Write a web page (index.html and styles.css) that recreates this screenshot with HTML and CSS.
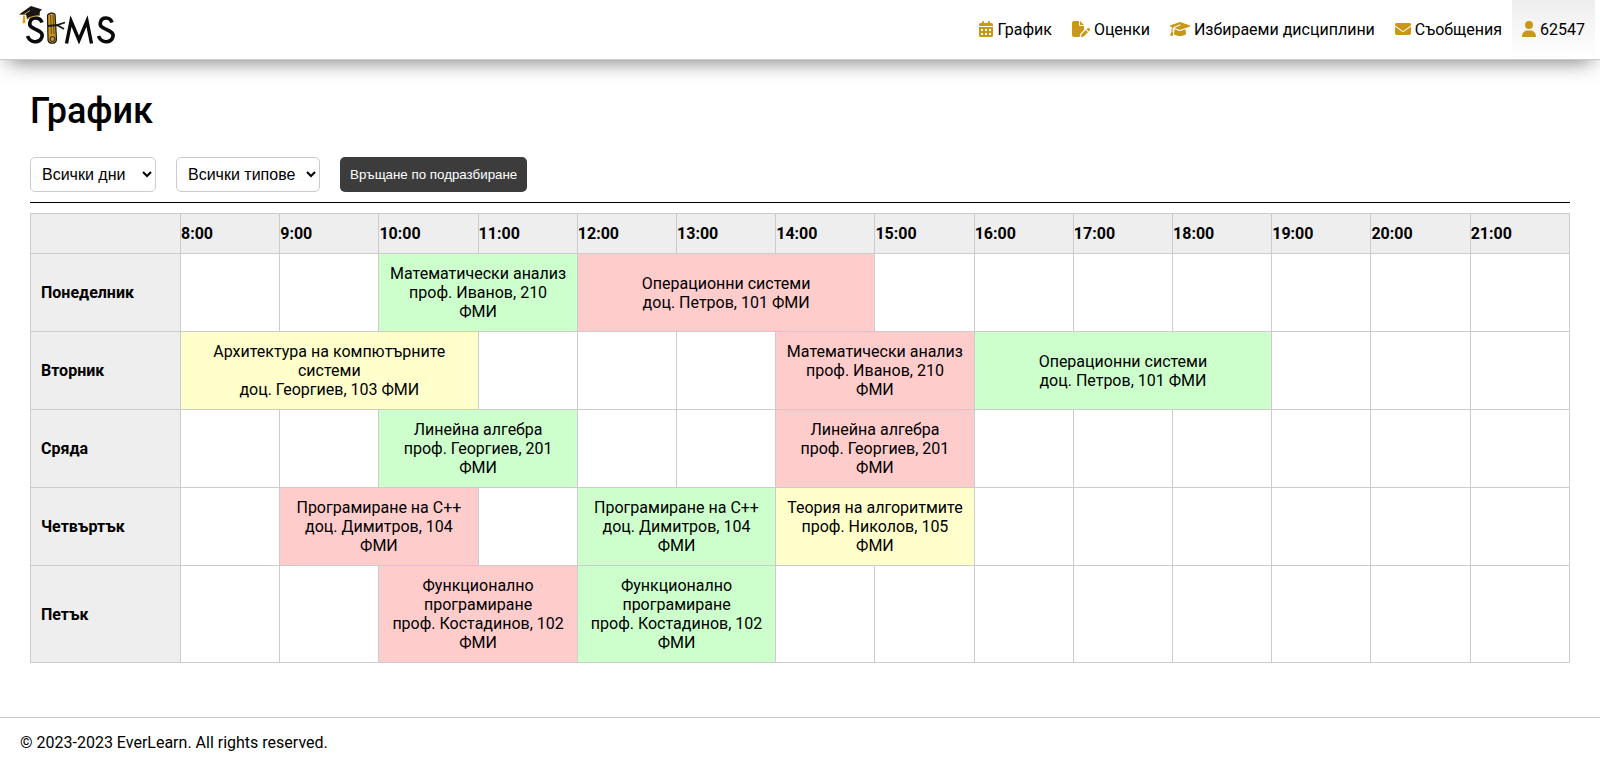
FILE: index.html
```html
<!DOCTYPE html>
<html lang="bg">
<head>
<meta charset="utf-8">
<title>График</title>
<link rel="stylesheet" href="styles.css">
</head>
<body>
<header class="site-header">
  <a class="logo" href="#" aria-label="SIMS">
    <svg viewBox="0 0 100 44" width="100" height="44" aria-hidden="true">
      <g fill="none" stroke="#0a0a0a" stroke-width="3.600">
        <path d="M22 17.500 C20 11.500 11.500 11.500 10 17 C8.500 22 13 23 16 24.500 C21 26.500 23.500 29 21.500 33 C19 38.500 10 38 7.500 31"/>
        <path d="M46.500 38.500 L51 16 L59 35 L67 16 L71.500 38.500" stroke-width="3.400"/>
        <path d="M92 17.500 C90 11.500 82 11.500 80.500 17 C79 22 83.500 23 86.500 24.500 C91.500 26.500 94.500 29 92.500 33 C90 38.500 81 38 78.500 31"/>
      </g>
      <path d="M-1 9.500 L11 1 L22 4.500 L16 10Z" fill="#161616"/>
      <path d="M6 8.500 L20 5 L19.500 11 C15 11 11 12 7 14.500Z" fill="#161616"/>
      <path d="M7 14 C11 11.500 15 11 19.500 10.500" fill="none" stroke="#c79a2b" stroke-width="1.200"/>
      <path d="M10 5.500 L4 9.500 V12" fill="none" stroke="#d9a520"/>
      <path d="M3 11 L5 11 L5.500 18 L2.500 18.500Z" fill="#d9a520"/>
      <path d="M27.500 10.500 C28 8 34 7 35 9.500 L36.500 34 C36.500 39.500 29 39.500 28 35Z" fill="#c8951d" stroke="#1a1a1a" stroke-width="1.200"/>
      <path d="M30.500 10 L31.500 29 M33 10 L34 29" fill="none" stroke="#6b4c08"/>
      <path d="M28 21 L37 20 L45 17.500 M37 20 L44 24" fill="none" stroke="#1a1a1a" stroke-width="1.800"/>
      <circle cx="32.500" cy="34" r="2.500" fill="none" stroke="#1a1a1a"/>
    </svg>
  </a>
  <nav class="nav">
    <a class="nav-link" href="#"><svg class="icon" viewBox="0 0 448 512" width="14" height="16" aria-hidden="true"><path fill-rule="evenodd" d="M96 32a32 32 0 0 1 64 0v32h128V32a32 32 0 0 1 64 0v32h48a48 48 0 0 1 48 48v48H0v-48a48 48 0 0 1 48-48h48zM0 192h448v272a48 48 0 0 1-48 48H48a48 48 0 0 1-48-48zM64 256v64h64v-64zM192 256v64h64v-64zM320 256v64h64v-64zM64 384v64h64v-64zM192 384v64h64v-64zM320 384v64h64v-64z"/></svg> График</a>
    <a class="nav-link" href="#"><svg class="icon" viewBox="0 0 576 512" width="18" height="16" aria-hidden="true"><path d="M0 64C0 28.700 28.700 0 64 0h160v128a32 32 0 0 0 32 32h128v126L279 391a64 64 0 0 0-16 28l-15 60a48 48 0 0 0 1 33H64c-35.300 0-64-28.700-64-64zM384 128H256V0zM550 235l14 15a40 40 0 0 1 0 56l-29 30-71-71 29-30a40 40 0 0 1 57 0zM312 417l129-129 71 71-129 129a32 32 0 0 1-15 9l-60 15a16 16 0 0 1-20-20l15-60a32 32 0 0 1 9-15z"/></svg> Оценки</a>
    <a class="nav-link" href="#"><svg class="icon" viewBox="0 0 640 512" width="20" height="16" aria-hidden="true"><path d="M320 32c-8.100 0-16.100 1.400-23.700 4.100L15.800 137.400C6.300 140.900 0 149.900 0 160s6.300 19.100 15.800 22.600l57.900 20.900C57.300 229.300 48 259.800 48 291.900v28.100c0 28.400-10.800 57.700-22.300 80.800-6.500 13-13.900 25.800-22.500 37.600C0 442.700-.9 448.300.9 453.400s6 8.900 11.200 10.200l64 16c4.200 1.100 8.700.3 12.400-2s6.300-6.100 7.100-10.400c8.600-42.800 4.300-81.200-2.100-108.700C90.300 344.300 86 329.800 80 316.500v-24.600c0-30.200 10.200-58.700 27.900-81.500 12.900-15.500 29.600-28 49.200-35.700l157-61.700c8.200-3.200 17.500.8 20.700 9s-.8 17.500-9 20.700l-157 61.700c-12.400 4.900-23.300 12.400-32.200 21.600l159.600 57.600c7.600 2.700 15.600 4.100 23.700 4.100s16.100-1.400 23.700-4.100l280.600-101c9.500-3.400 15.800-12.500 15.800-22.600s-6.300-19.100-15.800-22.600L343.700 36.100C336.100 33.400 328.100 32 320 32zM128 408c0 35.300 86 72 192 72s192-36.700 192-72l-15.300-145.400L354.500 314c-11.100 4-22.800 6-34.500 6s-23.500-2-34.500-6L143.300 262.600z"/></svg> Избираеми дисциплини</a>
    <a class="nav-link" href="#"><svg class="icon" viewBox="0 0 512 512" width="16" height="16" aria-hidden="true"><path d="M48 64a48 48 0 0 0-29 86l218 164a32 32 0 0 0 38 0l218-164a48 48 0 0 0-29-86zM0 176v208a64 64 0 0 0 64 64h384a64 64 0 0 0 64-64V176L294 339a64 64 0 0 1-76 0z"/></svg> Съобщения</a>
    <a class="nav-link nav-link-user" href="#"><svg class="icon" viewBox="0 0 448 512" width="14" height="16" aria-hidden="true"><path d="M224 256a128 128 0 1 0 0-256 128 128 0 0 0 0 256zM178 304C80 304 0 384 0 482a30 30 0 0 0 30 30h388a30 30 0 0 0 30-30c0-98-80-178-178-178z"/></svg> 62547</a>
  </nav>
</header>
<main class="content">
  <h1 class="title">График</h1>
  <form class="filters">
    <select class="select" aria-label="Ден"><option>Всички дни</option><option>Понеделник</option><option>Вторник</option><option>Сряда</option><option>Четвъртък</option><option>Петък</option></select>
    <select class="select" aria-label="Тип"><option>Всички типове</option></select>
    <button class="reset" type="reset">Връщане по подразбиране</button>
  </form>
  <table class="schedule">
    <thead>
      <tr><th class="corner"></th><th>8:00</th><th>9:00</th><th>10:00</th><th>11:00</th><th>12:00</th><th>13:00</th><th>14:00</th><th>15:00</th><th>16:00</th><th>17:00</th><th>18:00</th><th>19:00</th><th>20:00</th><th>21:00</th></tr>
    </thead>
    <tbody>
      <tr><th class="day" scope="row">Понеделник</th><td></td><td></td><td class="green" colspan="2">Математически анализ<br>проф. Иванов, 210 ФМИ</td><td class="red" colspan="3">Операционни системи<br>доц. Петров, 101 ФМИ</td><td></td><td></td><td></td><td></td><td></td><td></td><td></td></tr>
      <tr><th class="day" scope="row">Вторник</th><td class="yellow" colspan="3">Архитектура на компютърните системи<br>доц. Георгиев, 103 ФМИ</td><td></td><td></td><td></td><td class="red" colspan="2">Математически анализ<br>проф. Иванов, 210 ФМИ</td><td class="green" colspan="3">Операционни системи<br>доц. Петров, 101 ФМИ</td><td></td><td></td><td></td></tr>
      <tr><th class="day" scope="row">Сряда</th><td></td><td></td><td class="green" colspan="2">Линейна алгебра<br>проф. Георгиев, 201 ФМИ</td><td></td><td></td><td class="red" colspan="2">Линейна алгебра<br>проф. Георгиев, 201 ФМИ</td><td></td><td></td><td></td><td></td><td></td><td></td></tr>
      <tr><th class="day" scope="row">Четвъртък</th><td></td><td class="red" colspan="2">Програмиране на C++<br>доц. Димитров, 104 ФМИ</td><td></td><td class="green" colspan="2">Програмиране на C++<br>доц. Димитров, 104 ФМИ</td><td class="yellow" colspan="2">Теория на алгоритмите<br>проф. Николов, 105 ФМИ</td><td></td><td></td><td></td><td></td><td></td><td></td></tr>
      <tr><th class="day" scope="row">Петък</th><td></td><td></td><td class="red" colspan="2">Функционално програмиране<br>проф. Костадинов, 102 ФМИ</td><td class="green" colspan="2">Функционално програмиране<br>проф. Костадинов, 102 ФМИ</td><td></td><td></td><td></td><td></td><td></td><td></td><td></td><td></td></tr>
    </tbody>
  </table>
</main>
<footer class="site-footer">© 2023-2023 EverLearn. All rights reserved.</footer>
</body>
</html>
```

FILE: styles.css
```css
* {
  box-sizing: border-box;
}

body {
  margin: 0;
  min-height: 100vh;
  display: flex;
  flex-direction: column;
  font-family: Roboto, sans-serif;
  font-size: 16px;
  color: #000;
  background: #fff;
}

.site-header {
  display: flex;
  justify-content: space-between;
  height: 60px;
  padding: 0 5px 0 20px;
  border-bottom: 1px solid #ccc;
  background: #fff;
  box-shadow: 0 10px 20px -8px rgba(0, 0, 0, 0.5);
}

.logo {
  padding-top: 5px;
}

.logo svg {
  overflow: visible;
}

.nav {
  display: flex;
}

.nav-link {
  padding: 20px 10px;
  color: #000;
  text-decoration: none;
}

.nav-link-user {
  background: linear-gradient(#eee, #fff);
}

.icon {
  fill: #c99819;
  vertical-align: -2px;
}

.content {
  flex: 1;
  padding: 30px;
}

.title {
  margin: 0 0 25px;
  font-size: 36px;
  font-weight: 500;
  line-height: 42px;
}

.filters {
  display: flex;
  gap: 20px;
  padding-bottom: 10px;
  border-bottom: 1px solid #000;
}

.select {
  height: 35px;
  padding: 7px;
  border: 1px solid #ccc;
  border-radius: 5px;
  background: #fff;
  color: #000;
  font-family: "Liberation Sans", sans-serif;
  font-size: 16px;
}

.reset {
  padding: 10px;
  border: 0;
  border-radius: 5px;
  background: #3c3c3c;
  color: #fff;
  font-family: "Liberation Sans", sans-serif;
}

.schedule {
  width: 100%;
  margin-top: 10px;
  table-layout: fixed;
  border-collapse: collapse;
}

.schedule th,
.schedule td {
  padding: 10px;
  border: 1px solid #ccc;
  text-align: center;
}

.schedule th {
  padding: 10px 0;
  background: #eee;
  text-align: left;
}

.schedule .corner {
  width: 150px;
}

.schedule .day {
  padding: 10px;
}

.schedule .green {
  background: #cfc;
}

.schedule .red {
  background: #fcc;
}

.schedule .yellow {
  background: #ffc;
}

.site-footer {
  padding: 15px 20px;
  border-top: 1px solid #ccc;
}
```
